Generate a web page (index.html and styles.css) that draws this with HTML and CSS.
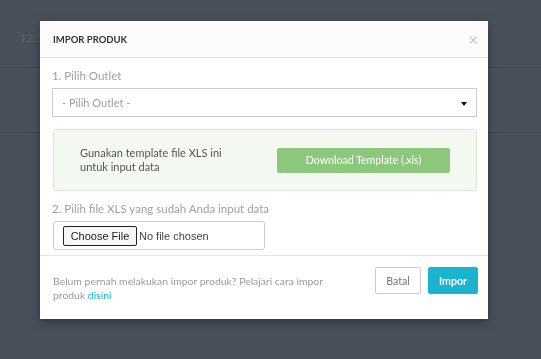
FILE: index.html
```html
<!DOCTYPE html>
<html>
  <head>
    <meta charset="utf-8">
    <title>Impor Produk</title>
    <link rel="stylesheet" href="styles.css">
  </head>
  <body>
    <div class="page">
      <div class="topbar"><span class="clock">12:3</span></div>
      <div class="row"></div>
    </div>

    <div class="overlay">
      <div class="modal">
        <div class="modal-header">
          <div class="modal-title">IMPOR PRODUK</div>
          <span class="close">&times;</span>
        </div>
        <div class="modal-body">
          <div class="label">1. Pilih Outlet</div>
          <div class="select">
            <span>- Pilih Outlet -</span>
            <span class="caret"></span>
          </div>
          <div class="template">
            <div class="template-text">Gunakan template file XLS ini untuk input data</div>
            <button class="btn-green">Download Template (.xls)</button>
          </div>
          <div class="label">2. Pilih file XLS yang sudah Anda input data</div>
          <div class="file-box">
            <input type="file" class="file">
          </div>
        </div>
        <div class="modal-footer">
          <div class="help">Belum pernah melakukan impor produk? Pelajari cara impor produk <a href="#">disini</a></div>
          <div class="actions">
            <button class="btn btn-default">Batal</button>
            <button class="btn btn-primary">Impor</button>
          </div>
        </div>
      </div>
    </div>
  </body>
</html>
```

FILE: styles.css
```css
* {
  margin:0;
  padding:0;
  box-sizing: border-box;
}
body {
  background: #4a505a;
  font-family: Lato, sans-serif;
  width: 541px;
  height: 359px;
  overflow: hidden;
}

/* page behind the backdrop */
.topbar {
  height: 68px;
  border-bottom: 1px solid #434851;
  padding: 26px 0 0 20px;
}
.clock {
  font-size: 11px;
  color: #5a606a;
}
.row {
  height: 65px;
  border-bottom: 1px solid #434851;
}

.overlay {
  position: fixed;
  top:0;
  left:0;
  right:0;
  bottom:0;
  padding: 21px 0 0 40px;
}
.modal {
  width: 448px;
  background: #fff;
  box-shadow: 0 3px 10px rgba(0,0,0,0.35);
}

.modal-header {
  height: 37px;
  background: #fbfbfb;
  border-bottom: 1px solid #e6e6e6;
  display: flex;
  align-items: center;
  justify-content: space-between;
  padding: 0 10px 0 13px;
}
.modal-title {
  font-size: 9.5px;
  font-weight: 700;
  color: #333;
}
.close {
  font-size: 17px;
  color: #c4c4c4;
  line-height: 1;
}

.modal-body {
  padding: 10px 11px 5px 12px;
}
.label {
  font-size: 11.5px;
  line-height: 16px;
  color: #a0a0a0;
}
.select {
  margin-top: 4px;
  height: 29px;
  border: 1px solid #ccc;
  display: flex;
  align-items: center;
  justify-content: space-between;
  padding: 0 9px 0 9px;
  font-size: 11px;
  color: #a0a0a0;
}
.caret {
  width: 0;
  height: 0;
  border-left: 3px solid transparent;
  border-right: 3px solid transparent;
  border-top: 4px solid #111;
  margin-top: 2px;
}

.template {
  margin: 12px 0 10px 1px;
  height: 62px;
  background: #f3f9f0;
  border: 1px solid #dbe9d3;
  border-radius: 3px;
  display: flex;
  align-items: center;
  justify-content: space-between;
  padding: 0 26px 0 26px;
}
.template-text {
  width: 160px;
  font-size: 11px;
  line-height: 14px;
  color: #555;
}
.btn-green {
  width: 173px;
  height: 25px;
  border: none;
  border-radius: 2px;
  background: #8cc87b;
  color: #fff;
  font-family: Lato, sans-serif;
  font-size: 10.6px;
}

.file-box {
  margin: 4px 0 0 1px;
  width: 212px;
  height: 29px;
  border: 1px solid #ccc;
  border-radius: 3px;
  display: flex;
  align-items: center;
  padding-left: 9px;
}
.file {
  font-family: "Liberation Sans", Arial, sans-serif;
  font-size: 11px;
  color: #444;
}
.file::file-selector-button {
  font-family: "Liberation Sans", Arial, sans-serif;
  font-size: 11px;
  height: 20px;
  width: 74px;
  margin-right: 2px;
  background: #f7f7f7;
  border: 1px solid #222;
  border-radius: 2px;
  color: #222;
}

.modal-footer {
  border-top: 1px solid #e6e6e6;
  height: 64px;
  display: flex;
  justify-content: space-between;
  padding: 11px 10px 0 13px;
}
.help {
  width: 290px;
  margin-top: 7px;
  font-size: 10.4px;
  line-height: 14px;
  color: #9a9a9a;
}
.help a {
  color: #17b4cf;
  text-decoration: none;
}
.actions {
  display: flex;
  gap: 7px;
  align-items: flex-start;
}
.btn {
  height: 27px;
  border-radius: 2px;
  font-family: Lato, sans-serif;
  font-size: 10.6px;
}
.btn-default {
  width: 46px;
  background: #fff;
  border: 1px solid #ccc;
  color: #777;
}
.btn-primary {
  width: 50px;
  background: #19b5cf;
  border: 1px solid #19b5cf;
  color: #fff;
  font-weight: 700;
}
```
